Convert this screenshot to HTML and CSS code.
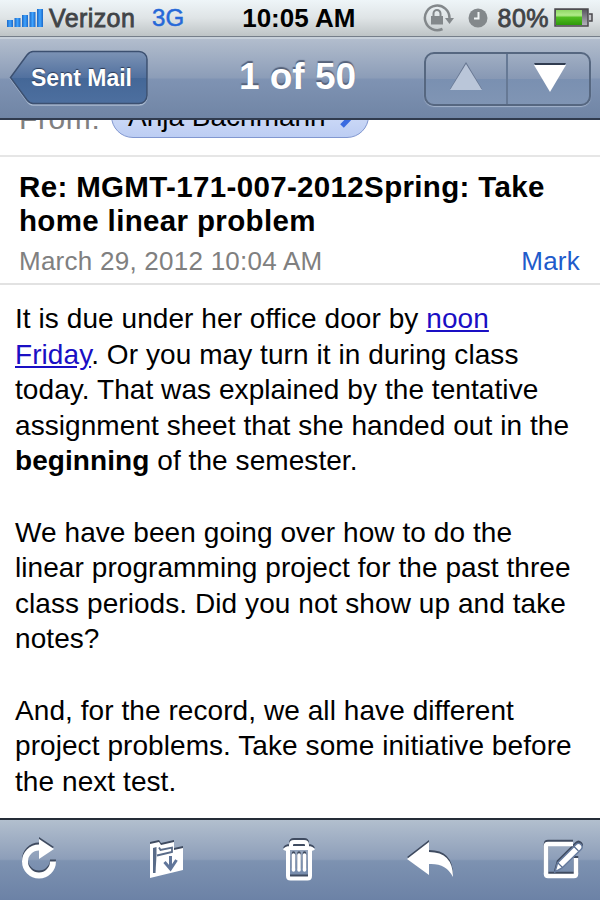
FILE: index.html
```
<!DOCTYPE html>
<html lang="en">
<head>
    <meta charset="utf-8">
    <title>1 of 50</title>
    <link rel="stylesheet" href="styles.css">
</head>
<body>
<div class="phone">

    <div class="status">
        <svg class="signal" width="36" height="18" viewBox="0 0 36 18">
            <defs>
                <linearGradient id="bars" x1="0" y1="0" x2="1" y2="0">
                    <stop offset="0" stop-color="#1d67c4"/>
                    <stop offset=".5" stop-color="#3fa4ff"/>
                    <stop offset="1" stop-color="#1b68c8"/>
                </linearGradient>
            </defs>
            <g fill="url(#bars)">
                <rect x="0" y="11" width="6" height="7"/>
                <rect x="7.5" y="9" width="6" height="9"/>
                <rect x="15" y="6" width="6" height="12"/>
                <rect x="22.5" y="3" width="6" height="15"/>
                <rect x="30" y="0" width="6" height="18"/>
            </g>
        </svg>
        <span class="carrier">Verizon</span>
        <span class="network">3G</span>
        <span class="clock">10:05 AM</span>
        <svg class="lock" width="32" height="28" viewBox="0 0 32 28">
            <path d="M19.500 25A12.300 12.300 0 1 1 26.500 14" fill="none" stroke="#83888b" stroke-width="2.500"/>
            <path d="M22 14h9l-4.500 6z" fill="#83888b"/>
            <rect x="8" y="12" width="12" height="8.500" fill="#83888b"/>
            <path d="M10.500 12V9.500a3.500 3.500 0 0 1 7 0V12" fill="none" stroke="#83888b" stroke-width="2"/>
        </svg>
        <svg class="alarm" width="20" height="20" viewBox="0 0 20 20">
            <circle cx="10" cy="10" r="9.500" fill="#83888b"/>
            <path d="M10.500 4v6.500H6" fill="none" stroke="#f2f5f6" stroke-width="2"/>
        </svg>
        <span class="percent">80%</span>
        <svg class="battery" width="40" height="20" viewBox="0 0 40 20">
            <defs>
                <linearGradient id="charge" x1="0" y1="0" x2="0" y2="1">
                    <stop offset="0" stop-color="#8fd865"/>
                    <stop offset=".35" stop-color="#b1eb8a"/>
                    <stop offset=".5" stop-color="#51bd21"/>
                    <stop offset="1" stop-color="#2f9a0c"/>
                </linearGradient>
                <linearGradient id="empty" x1="0" y1="0" x2="0" y2="1">
                    <stop offset="0" stop-color="#55535c"/>
                    <stop offset="1" stop-color="#b9b7c1"/>
                </linearGradient>
            </defs>
            <rect x="1" y="1" width="33" height="17" fill="url(#empty)" stroke="#4b494e" stroke-width="1.500"/>
            <rect x="2" y="2" width="26" height="15" fill="url(#charge)"/>
            <path d="M35 6h3v7h-3" fill="#c4c5ca" stroke="#4b494e" stroke-width="1.500"/>
        </svg>
    </div>

    <div class="navbar">
        <a class="back">
            <svg class="back-shape" width="140" height="57" viewBox="0 0 140 57">
                <defs>
                    <linearGradient id="backfill" x1="0" y1="0" x2="0" y2="1">
                        <stop offset="0" stop-color="#7c93b5"/>
                        <stop offset=".5" stop-color="#52719f"/>
                        <stop offset=".51" stop-color="#446797"/>
                        <stop offset="1" stop-color="#4d6f9f"/>
                    </linearGradient>
                </defs>
                <path d="M24 2.500H130a8 8 0 0 1 8 8V47a8 8 0 0 1-8 8H24Q21 55 18 51L1.500 28.500 18 6Q21 2.500 24 2.500z" fill="none" stroke="#a9b9d0" stroke-width="1.500"/>
                <path d="M24 1.500H130a8 8 0 0 1 8 8V45.500a8 8 0 0 1-8 8H24Q21 53.500 18 50L1.500 27.500 18 5Q21 1.500 24 1.500z" fill="url(#backfill)" stroke="#3c5070" stroke-width="1.500"/>
            </svg>
            <span class="back-label">Sent Mail</span>
        </a>
        <h1 class="title">1 of 50</h1>
        <div class="pager">
            <span class="page-up">
                <svg width="34" height="30" viewBox="0 0 34 30">
                    <path d="M17 0l16 27H1z" fill="#65748f"/>
                    <path d="M17 2l16 26H1z" fill="#bac6d9"/>
                </svg>
            </span>
            <span class="page-down">
                <svg width="34" height="30" viewBox="0 0 34 30">
                    <path d="M1 0h32L17 26z" fill="#303c50"/>
                    <path d="M1 2h32L17 29z" fill="#fff"/>
                </svg>
            </span>
        </div>
    </div>

    <div class="message">
        <div class="from">
            <span class="from-label">From:</span>
            <span class="sender">
                <span class="sender-name">Anja Bachmann</span>
                <svg class="chevron" width="18" height="28" viewBox="0 0 18 28">
                    <path d="M2 1l12 10.500L3 23" fill="none" stroke="#3a6be0" stroke-width="5"/>
                </svg>
            </span>
        </div>

        <div class="heading">
            <h2 class="subject">Re: MGMT-171-007-2012Spring: Take<br>home linear problem</h2>
            <div class="meta">
                <span class="date">March 29, 2012 10:04 AM</span>
                <a class="mark">Mark</a>
            </div>
        </div>

        <div class="text">
            <p>It is due under her office door by <a class="link">noon<br>Friday</a>. Or you may turn it in during class<br>today. That was explained by the tentative<br>assignment sheet that she handed out in the<br><b>beginning</b> of the semester.</p>
            <p>We have been going over how to do the<br>linear programming project for the past three<br>class periods. Did you not show up and take<br>notes?</p>
            <p>And, for the record, we all have different<br>project problems. Take some initiative before<br>the next test.</p>
        </div>
    </div>

    <div class="toolbar">
        <svg class="icon" width="36" height="44" viewBox="0 0 36 44">
            <path d="M18 9.500A14 14 0 1 0 32 23.500" fill="none" stroke="#fff" stroke-width="6"/>
            <path d="M18 1v20L33 11z" fill="#fff"/>
        </svg>
        <svg class="icon folder" width="36" height="38" viewBox="0 0 36 38">
            <path d="M1 3l9-2 2 3 13-3v8l9-2v22L1 37z" fill="#fff"/>
            <path d="M4 7l3.500-1v8L6.500 32H4z" fill="#596b88"/>
            <path d="M8 14.500l15-3.500V6.500L11.500 9 10 6.500" fill="none" stroke="#596b88" stroke-width="1.800"/>
            <path d="M21.500 15v13M15.500 21l6 7 6-9" fill="none" stroke="#61769a" stroke-width="3"/>
        </svg>
        <svg class="icon trash" width="32" height="44" viewBox="0 0 32 44">
            <path d="M2 12.500Q3 10 7 10h18q4 0 5 2.500M8 10V7q0-3 3-3h10q3 0 3 3v3" fill="none" stroke="#fff" stroke-width="4"/>
            <path d="M5 10v28q0 2.500 2.500 2.500h17q2.500 0 2.500-2.500V10" fill="none" stroke="#fff" stroke-width="4"/>
            <path d="M10.500 17v15M16 17v15M21.500 17v15" stroke="#fff" stroke-width="3.500" stroke-linecap="round"/>
        </svg>
        <svg class="icon reply" width="46" height="38" viewBox="0 0 46 38">
            <path d="M0 18L22 1v10q24 0 24 25Q39 22 22 23v11z" fill="#fff"/>
        </svg>
        <svg class="icon" width="40" height="38" viewBox="0 0 40 38">
            <path d="M30 3H5Q3 3 3 5v28q0 2 2 2h26q2 0 2-2V17" fill="none" stroke="#fff" stroke-width="4.500"/>
            <path d="M12 31l2.500-9L33 3.500q2.500-2.500 5 0t0 5L19 27z" fill="#fff" stroke="#667b9e" stroke-width="1.500"/>
            <path d="M15 22l4.500 4.500M31 5.500l4.500 4.500" stroke="#596e91" stroke-width="1.200"/>
        </svg>
    </div>

</div>
</body>
</html>
```

FILE: styles.css
```
* {
    box-sizing: border-box;
}

body {
    margin: 0;
    background: #fff;
    font-family: "Liberation Sans", Arial, sans-serif;
    color: #000;
}

h1, h2, p {
    margin: 0;
}

svg {
    display: block;
    flex: none;
}

.phone {
    display: flex;
    flex-direction: column;
    width: 600px;
    height: 900px;
    overflow: hidden;
}

/* status bar */

.status {
    display: flex;
    flex: none;
    align-items: center;
    height: 37px;
    padding: 0 6px 0 7px;
    background: linear-gradient(#eef5f8, #dfe4e6 50%, #bec4c6);
    border-bottom: 1px solid #757e89;
    font-size: 25px;
    white-space: nowrap;
}

.carrier {
    width: 104px;
    margin-left: 6px;
    color: #414447;
    letter-spacing: .4px;
    -webkit-text-stroke: .8px #414447;
}

.network {
    width: 91px;
    color: #2668d8;
    font-size: 24px;
    -webkit-text-stroke: .5px #2668d8;
}

.clock {
    width: 182px;
    font-size: 26px;
    font-weight: bold;
}

.alarm {
    margin-left: 13px;
}

.percent {
    width: 57px;
    margin-left: 10px;
    color: #414447;
    letter-spacing: .5px;
    -webkit-text-stroke: .8px #414447;
}

/* top bar */

.navbar {
    display: grid;
    grid-template-columns: 140px 1fr 167px;
    align-items: center;
    flex: none;
    height: 83px;
    padding: 0 9px 0 9px;
    background: linear-gradient(#b2bdcd, #8c9db8 49%, #7f93b3 51%, #7085a5);
    border-top: 2px solid #c7d0da;
    border-bottom: 2px solid #303b4e;
}

.back {
    display: grid;
    align-items: center;
}

.back-shape, .back-label {
    grid-area: 1 / 1;
}

.back-label {
    padding-left: 22px;
    color: #fff;
    font-size: 23px;
    font-weight: bold;
    text-shadow: 0 -1px 1px #2b3b56;
}

.title {
    padding: 0 0 4px 22px;
    color: #fff;
    font-size: 37px;
    line-height: 40px;
    text-align: center;
    text-shadow: 0 -2px 1px #56627a;
}

.pager {
    display: grid;
    grid-template-columns: 1fr 1fr;
    height: 54px;
    border: 2px solid #566780;
    border-radius: 10px;
    background: linear-gradient(#a0aec3, #8798b4 50%, #7a90b1 51%, #8095b4);
    box-shadow: 0 1px 1px #a5b4cb;
}

.page-up, .page-down {
    display: flex;
    align-items: center;
    justify-content: center;
}

.page-up {
    padding-bottom: 3px;
    border-right: 2px solid #667995;
}

.page-down {
    padding: 0 0 2px 4px;
}

/* mail */

.message {
    flex: 1;
    min-height: 0;
    overflow: hidden;
}

/* header row is scrolled halfway under the top bar */
.from {
    display: flex;
    align-items: flex-end;
    height: 37px;
    padding: 0 0 17px 19px;
    border-bottom: 2px solid #e6e6e6;
}

.from-label {
    width: 92px;
    padding-bottom: 3px;
    color: #808080;
    font-size: 30px;
    line-height: 32px;
    letter-spacing: .6px;
}

.sender {
    display: flex;
    align-items: center;
    width: 258px;
    height: 44px;
    padding: 2px 0 0 16px;
    border: 1px solid #8197d0;
    border-radius: 22px;
    background: linear-gradient(#dce5fa, #bccdf3);
    font-size: 28px;
    line-height: 32px;
}

.sender-name {
    width: 211px;
    white-space: nowrap;
}

.heading {
    height: 128px;
    padding: 13px 20px 0 19px;
    border-bottom: 2px solid #e2e2e2;
}

.subject {
    font-size: 29.5px;
    line-height: 34px;
    letter-spacing: .35px;
    white-space: nowrap;
}

.meta {
    display: flex;
    justify-content: space-between;
    margin-top: 7px;
    font-size: 26px;
    line-height: 32px;
    letter-spacing: .25px;
}

.date {
    color: #808080;
}

.mark {
    color: #1f5bcb;
}

.text {
    padding: 16px 0 0 15px;
    font-size: 28px;
    line-height: 35.6px;
    letter-spacing: .07px;
    white-space: nowrap;
}

.text p {
    margin-bottom: 35.6px;
}

.link {
    color: #1a0fc4;
    text-decoration: underline;
}

/* bottom bar */

.toolbar {
    display: flex;
    align-items: center;
    justify-content: space-between;
    flex: none;
    height: 82px;
    padding: 0 17px 0 21px;
    background: linear-gradient(#b2bfce, #8d9eb9 49%, #7d92b1 51%, #6c82a6);
    border-top: 2px solid #252d38;
}

.icon {
    filter: drop-shadow(0 -1.5px 0 #3f4b60);
}

.trash {
    margin-left: 6px;
}

.reply {
    margin-right: -2px;
}
```
